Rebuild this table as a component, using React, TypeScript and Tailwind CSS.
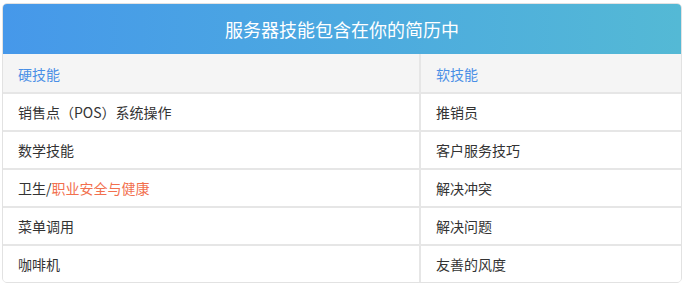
import React from 'react'

const rows: [React.ReactNode, string][] = [
  ['销售点（POS）系统操作', '推销员'],
  ['数学技能', '客户服务技巧'],
  [
    <>
      卫生/<span className="text-[#f2704e]">职业安全与健康</span>
    </>,
    '解决冲突',
  ],
  ['菜单调用', '解决问题'],
  ['咖啡机', '友善的风度'],
]

const App = () => {
  return (
    <div className="w-[685px] h-[287px] bg-white pt-[3px] pl-[2px] [font-family:'Noto_Sans_CJK_SC','Noto_Sans',sans-serif]">
      <div className="w-[680px] rounded-[5px] border border-[#e2e2e2] overflow-hidden">
        <div className="h-[50px] flex items-center justify-center bg-gradient-to-r from-[#4698ea] to-[#54b9d5] text-white text-[18px] leading-none">
          服务器技能包含在你的简历中
        </div>
        <div className="grid grid-cols-[416px_1fr] gap-x-[2px] gap-y-[2px] bg-[#e6e6e6]">
          <div className="h-[38px] bg-[#f5f5f5] flex items-center pl-[15px] pt-[3px] text-[14px] text-[#4a8fe6]">硬技能</div>
          <div className="h-[38px] bg-[#f5f5f5] flex items-center pl-[15px] pt-[3px] text-[14px] text-[#4a8fe6]">软技能</div>
          {rows.map(([a, b], i) => (
            <React.Fragment key={i}>
              <div className="h-[36px] bg-white flex items-center pl-[15px] text-[14px] text-[#333]">{a}</div>
              <div className="h-[36px] bg-white flex items-center pl-[15px] text-[14px] text-[#333]">{b}</div>
            </React.Fragment>
          ))}
        </div>
      </div>
    </div>
  )
}

export default App
